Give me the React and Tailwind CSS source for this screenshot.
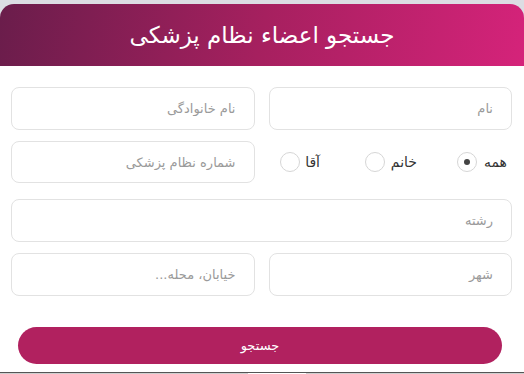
export default function App() {
  const inputCls = "rounded-[8px] border border-[#e2e2e2] px-[18px] text-[13px] placeholder:text-[#9a9a9a] outline-none";
  return (
    <div dir="rtl" className="w-[524px] h-[374px] bg-[#dcdde3] overflow-hidden flex flex-col [font-family:'DejaVu_Sans','Noto_Sans',sans-serif]">
      <div className="h-[4px] shrink-0" />
      <div className="h-[62px] shrink-0 rounded-t-[14px] bg-[linear-gradient(100deg,#6a1d4b_0%,#a6205f_50%,#d5237a_100%)] flex items-center justify-center">
        <h1 className="text-white text-[23px] leading-none pt-[1px]">جستجو اعضاء نظام پزشکی</h1>
      </div>
      <div className="h-[306px] shrink-0 bg-white pt-[21px] pr-[12px] pl-[11px]">
        <div className="grid grid-cols-2 gap-x-[14px]">
          <input placeholder="نام" className={"h-[43px] " + inputCls} />
          <input placeholder="نام خانوادگی" className={"h-[43px] " + inputCls} />
        </div>
        <div className="grid grid-cols-2 gap-x-[14px] mt-[11px]">
          <div className="flex items-center pr-[5px] text-[14px] text-[#333]">
            <label className="flex items-center">
              <span className="w-[24px]">همه</span>
              <span className="mr-[6px] w-[20px] h-[20px] rounded-full border border-[#d6d6d6] flex items-center justify-center">
                <span className="w-[6px] h-[6px] rounded-full bg-[#444]" />
              </span>
            </label>
            <label className="flex items-center mr-[40px]">
              <span className="w-[30px]">خانم</span>
              <span className="mr-[2px] w-[20px] h-[20px] rounded-full border border-[#d6d6d6]" />
            </label>
            <label className="flex items-center mr-[45px]">
              <span className="w-[15px]">آقا</span>
              <span className="mr-[5px] w-[20px] h-[20px] rounded-full border border-[#d6d6d6]" />
            </label>
          </div>
          <input placeholder="شماره نظام پزشکی" className={"h-[42px] " + inputCls} />
        </div>
        <input placeholder="رشته" className={"mt-[16px] w-full h-[43px] " + inputCls} />
        <div className="grid grid-cols-2 gap-x-[14px] mt-[11px]">
          <input placeholder="شهر" className={"h-[43px] " + inputCls} />
          <input placeholder="خیابان، محله..." className={"h-[43px] " + inputCls} />
        </div>
        <div className="mt-[31px] pl-[7px] pr-[10px]">
          <button className="w-full h-[37px] rounded-full bg-[#b1215f] text-white text-[13px]">جستجو</button>
        </div>
      </div>
      <div className="h-[1px] bg-[#555] shrink-0" />
      <div dir="ltr" className="h-[1px] bg-[#cfcfcf] shrink-0 flex pl-[248px]">
        <div className="w-[58px] bg-white" />
      </div>
    </div>
  );
}
